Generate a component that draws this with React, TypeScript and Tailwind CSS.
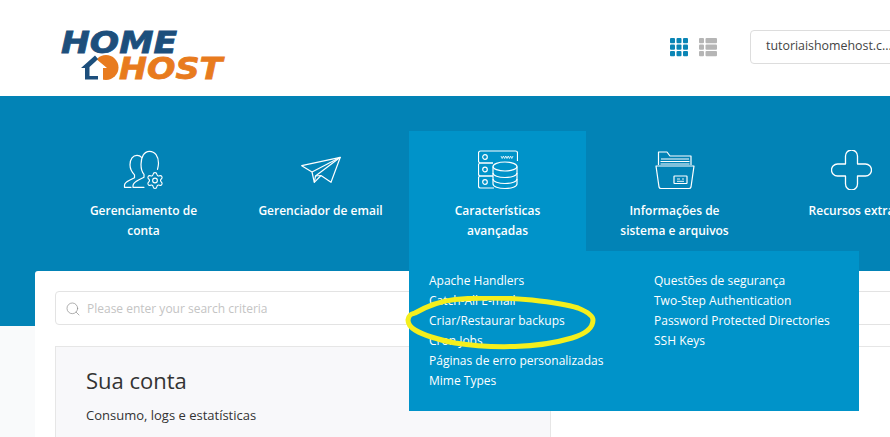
import { Search, Settings } from 'lucide-react'

const leftLinks = [
  'Apache Handlers',
  'Catch-All E-mail',
  'Criar/Restaurar backups',
  'Cron Jobs',
  'Páginas de erro personalizadas',
  'Mime Types',
]
const rightLinks = [
  'Questões de segurança',
  'Two-Step Authentication',
  'Password Protected Directories',
  'SSH Keys',
]

function Logo() {
  return (
    <div className="mt-[16px] w-[240px] select-none font-['DejaVu_Sans',sans-serif] font-bold italic">
      <div className="ml-[61px] h-[25px] origin-left scale-x-[1.15] text-[30px] leading-[25px] text-[#1d4f7c] [-webkit-text-stroke:0.8px_#1d4f7c]">
        HOME
      </div>
      <div className="flex h-[26px] items-center">
        <svg width="38" height="25" viewBox="0 0 38 25" className="ml-[81px] shrink-0">
          <circle cx="25" cy="12.5" r="12.5" fill="#e87b1e" />
          <path d="M14 3 L26 13 H22 V25 H0 V0 H14 Z" fill="#fff" />
          <path d="M14 0.5 L0 13 H4 V24.5 H17 V21 H8.5 V12 L14 7 L17 4 Z" fill="#1d4f7c" />
        </svg>
        <span className="origin-left scale-x-[1.08] text-[31px] leading-[26px] text-[#e87b1e] [-webkit-text-stroke:0.8px_#e87b1e]">
          HOST
        </span>
      </div>
    </div>
  )
}

function GridIcon() {
  return (
    <svg width="18" height="19" viewBox="0 0 18 19" fill="#0a85b5">
      {[0, 6.5, 13].map((y) =>
        [0, 6.5, 13].map((x) => <rect key={`${x}-${y}`} x={x} y={y} width="5" height="5.2" rx="1" />),
      )}
    </svg>
  )
}

function ListIcon() {
  return (
    <svg width="18" height="19" viewBox="0 0 18 19" fill="#b5b5b5">
      {[0, 6.5, 13].map((y) => (
        <g key={y}>
          <rect x="0" y={y} width="5" height="5.2" rx="1" />
          <rect x="6.5" y={y} width="11.5" height="5.2" rx="1" />
        </g>
      ))}
    </svg>
  )
}

function UsersIcon() {
  return (
    <svg width="42" height="40" viewBox="0 0 42 40" fill="none" stroke="#fff" strokeWidth="1.2" strokeLinejoin="round" strokeLinecap="round">
      <path d="M21 37.3 H10 v-1.5 c0-3 3-4.5 6-6 l5-2.5 v-3 c-2-2-3-5-3-10 0-7 3-13 8.5-13 s9 5 9 12 c0 2-.5 4-1 6" />
      <path d="M8 37.3 H1.5 v-2 c0-2 2-3.5 5-5 l5-2.5 v-3 c-3-3-4.5-6-4.5-10 0-6 3-9.5 7-9.5 2 0 3.5.7 4.5 2" />
      <Settings x={22.5} y={21} width={19} height={19} strokeWidth={1.4} color="#fff" />
    </svg>
  )
}

function PlaneIcon() {
  return (
    <svg width="40" height="28" viewBox="0 0 40 28" fill="none" stroke="#fff" strokeWidth="1.2" strokeLinejoin="round">
      <path d="M39.3 1.3 L.7 9.7 L11 16 L13.3 26.3 L20 19.5 L30 26.3 Z" />
      <path d="M39.3 1.3 L11 16" />
      <path d="M39.3 1.3 L14.5 20 L13.3 26.3" />
      <path d="M14.5 20 L20 19.5" />
    </svg>
  )
}

function ServerIcon() {
  return (
    <svg width="40" height="40" viewBox="0 0 40 40" fill="none" stroke="#fff" strokeWidth="1.2" strokeLinejoin="round">
      <path d="M15 13 H2.5 a2 2 0 0 1-2-2 V3 a2 2 0 0 1 2-2 H37.5 a2 2 0 0 1 2 2 V11" />
      <path d="M15 13 H2.5 a2 2 0 0 0-2 2 V24 a2 2 0 0 0 2 2 H15" />
      <path d="M15 26 H2.5 a2 2 0 0 0-2 2 V36 a2 2 0 0 0 2 2 H16" />
      <circle cx="7" cy="7" r="2.3" />
      <circle cx="7" cy="19.5" r="2.3" />
      <circle cx="7" cy="32" r="2.3" />
      <path d="M23 6 l1.2 2.5 1.2-2.5 1.2 2.5 1.2-2.5 1.2 2.5 1.2-2.5 1.2 2.5 1.2-2.5 1.2 2.5 1.2-2.5" strokeWidth="0.8" />
      <ellipse cx="27" cy="16.5" rx="12" ry="4.5" />
      <path d="M15 16.5 V34 c0 2.5 5.4 4.5 12 4.5 s12-2 12-4.5 V16.5" />
      <path d="M15 23 c0 2.5 5.4 4.5 12 4.5 s12-2 12-4.5" />
      <path d="M15 29 c0 2.5 5.4 4.5 12 4.5 s12-2 12-4.5" />
    </svg>
  )
}

function FolderIcon() {
  return (
    <svg width="40" height="39" viewBox="0 0 40 39" fill="none" stroke="#fff" strokeWidth="1.2" strokeLinejoin="round">
      <path d="M3.5 14 V1 H12 L15 5 H36 V14" />
      <path d="M6 8 H34 M5.5 10.5 H34.5 M5.5 13 H34.5" />
      <path d="M1 15 H39 L36 36 a2 2 0 0 1-2 1.5 H6 a2 2 0 0 1-2-1.5 Z" />
      <rect x="19" y="25" width="13" height="7.5" rx="0.5" />
      <path d="M22 28 H25 M27 28 H29 M22 30.3 H29" strokeWidth="0.9" />
    </svg>
  )
}

function PlusIcon() {
  return (
    <svg width="41" height="40" viewBox="0 0 41 40" fill="none" stroke="#fff" strokeWidth="1.3" strokeLinejoin="round">
      <path d="M14.5 6 a6 6 0 0 1 12 0 V14 H34.5 a5.8 5.8 0 0 1 0 12 H26.5 V34 a6 6 0 0 1-12 0 V26 H6.5 a5.8 5.8 0 0 1 0-12 H14.5 Z" />
    </svg>
  )
}

function NavItem({ icon, lines, active }: { icon: React.ReactNode; lines: string[]; active?: boolean }) {
  return (
    <div className={`relative h-[120px] w-[177px] shrink-0 ${active ? 'bg-[#0093c9]' : ''}`}>
      <div className="flex h-[60px] items-end justify-center pb-[1px]">{icon}</div>
      <div className="mt-[10px] text-center text-[12px] leading-[20px] font-semibold whitespace-nowrap text-white">
        {lines.map((l) => (
          <div key={l}>{l}</div>
        ))}
      </div>
      {active && (
        <div className="absolute top-[120px] left-0 z-10 flex h-[160px] w-[450px] bg-[#0093c9] pt-[20px] pl-[20px] text-[12px] leading-[20px] text-white">
          <ul className="w-[225px]">
            {leftLinks.map((l) => (
              <li key={l}>{l}</li>
            ))}
          </ul>
          <ul>
            {rightLinks.map((l) => (
              <li key={l}>{l}</li>
            ))}
          </ul>
        </div>
      )}
    </div>
  )
}

export default function App() {
  return (
    <div className="relative h-[437px] overflow-hidden bg-[#f9fafb] font-['Open_Sans',sans-serif]">
      <header className="flex h-[96px] items-center bg-white">
        <div className="w-[670px] shrink-0 pb-[2px]">
          <Logo />
        </div>
        <div className="flex w-[80px] shrink-0 gap-[11px] pb-[2px]">
          <GridIcon />
          <ListIcon />
        </div>
        <div className="mb-[3px] flex h-[34px] w-[200px] shrink-0 items-center rounded-[4px] border border-[#ddd] bg-white pl-[15px] text-[12.4px] whitespace-nowrap text-[#444]">
          tutoriaishomehost.c...
        </div>
      </header>

      <div className="h-[230px] bg-[#0283b6] pt-[35px] pl-[55px]">
        <div className="flex w-[900px]">
          <NavItem icon={<UsersIcon />} lines={['Gerenciamento de', 'conta']} />
          <NavItem icon={<div className="pb-[6px]"><PlaneIcon /></div>} lines={['Gerenciador de email']} />
          <NavItem icon={<ServerIcon />} lines={['Características', 'avançadas']} active />
          <NavItem icon={<FolderIcon />} lines={['Informações de', 'sistema e arquivos']} />
          <NavItem icon={<PlusIcon />} lines={['Recursos extra']} />
        </div>
      </div>

      <main className="relative mt-[-55px] ml-[35px] h-[200px] w-[900px] rounded-t-[3px] bg-white px-[20px] pt-[20px]">
        <div className="flex h-[34px] items-center rounded-[4px] border border-[#e3e3e3] bg-white pt-[1px] pl-[9px] text-[12px] text-[#c4c4c4]">
          <Search size={16} strokeWidth={1} className="mr-[6px] text-[#888]" />
          Please enter your search criteria
        </div>
        <div className="mt-[21px] flex border-t border-[#e6e6e6]">
          <section className="h-[120px] w-[496px] shrink-0 border-x border-[#e6e6e6] bg-[#f8f8fa] pt-[18px] pl-[30px] text-[#333]">
            <h2 className="text-[22px] leading-[30px]">Sua conta</h2>
            <p className="mt-[10px] text-[13px] leading-[20px]">Consumo, logs e estatísticas</p>
          </section>
          <section className="h-[120px] flex-1 bg-white pt-[20px]">
            <div className="ml-[200px] h-[35px] w-[101px] border border-[#f4f4f4]" />
          </section>
        </div>
      </main>

      {/* hand drawn highlight over the menu */}
      <svg width="194" height="56" viewBox="0 0 194 56" fill="none" className="absolute top-[296px] left-[405px] z-20">
        <path
          d="M3 24 C4 18 7 18 10 17 C24 9 36 5 50 3.5 C75 1 105 2 127 4 C145 6 160 8 173 12 C183 16 188 20 188 24 C188 32 180 38 167 42 C150 47 130 50 110 50.5 C90 51 68 50 50 47 C35 44 20 40 10 34 C5 31 3 28 3 24 Z"
          stroke="#f4ef1c"
          strokeWidth="5"
        />
      </svg>
    </div>
  )
}
